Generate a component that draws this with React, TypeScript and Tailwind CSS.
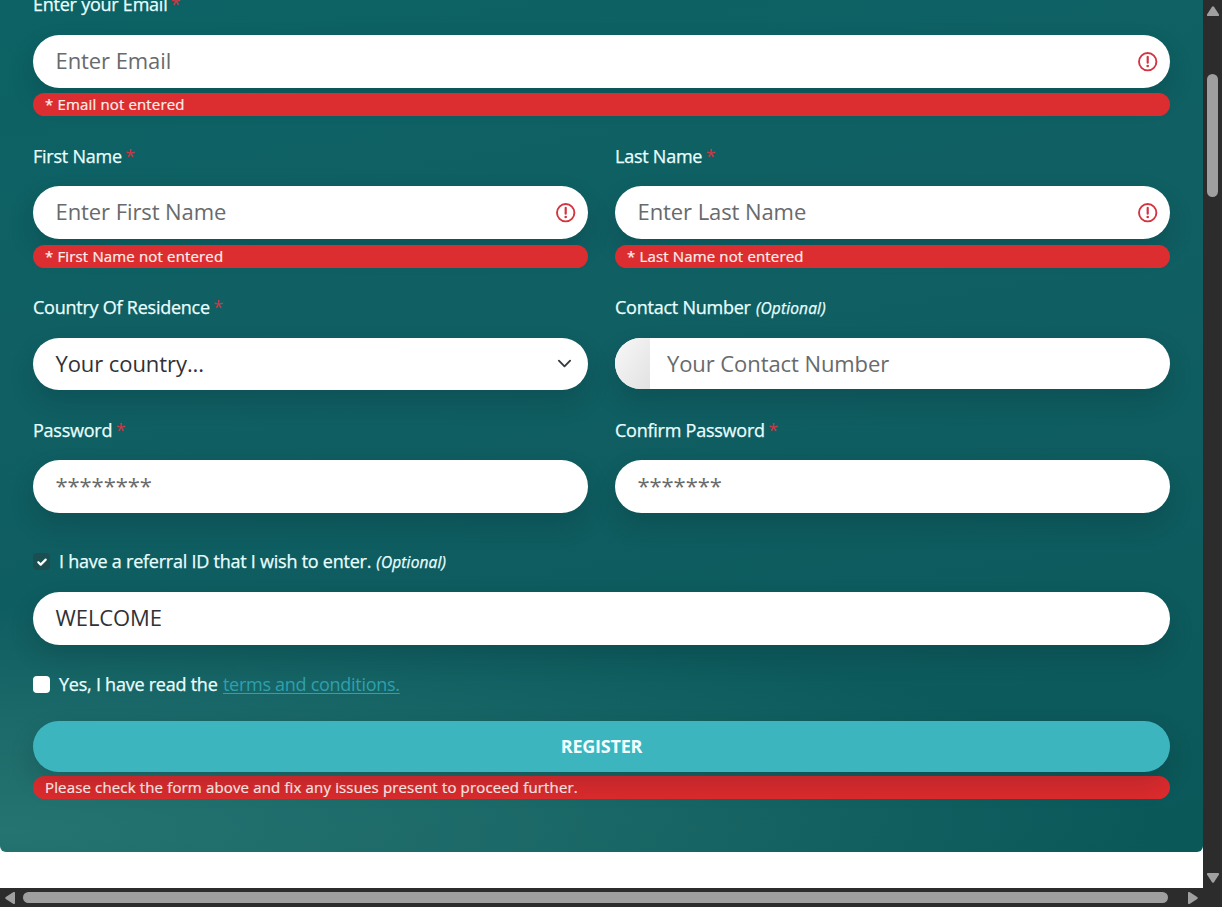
import type { ReactNode } from "react";

const shadow = "shadow-[0_12px_26px_rgba(0,20,25,0.16)]";

function Label({ text, required, optional }: { text: string; required?: boolean; optional?: boolean }) {
  return (
    <label className="block h-[27px] whitespace-nowrap text-[18px] leading-[27px] font-medium tracking-[-0.24px] text-[#e9ffff] [-webkit-text-stroke:0.25px]">
      {text}
      {required && <span className="-ml-px font-normal text-[#c93a47] [-webkit-text-stroke:0]"> *</span>}
      {optional && <em className="ml-px text-[15.5px] tracking-[0.15px]"> (Optional)</em>}
    </label>
  );
}

function ErrorIcon() {
  return (
    <svg viewBox="0 0 20 20" className="mt-0.5 size-5" fill="none" stroke="#d33440">
      <circle cx="9.7" cy="9.7" r="8.7" strokeWidth="1.9" />
      <path d="M9.7 4.900v5.800" strokeWidth="2.2" strokeLinecap="round" />
      <circle cx="9.7" cy="14" r="1.3" fill="#d33440" stroke="none" />
    </svg>
  );
}

function Field({ children, icon, dark, className = "mt-4" }: { children: ReactNode; icon?: ReactNode; dark?: boolean; className?: string }) {
  return (
    <div
      className={`flex h-[53px] items-center justify-between rounded-full bg-white pr-[12.5px] pb-0.5 pl-[22.5px] text-[22px] tracking-[-0.08px] ${shadow} ${className} ${dark ? "text-[#303236]" : "text-[#686a6c]"}`}
    >
      <span>{children}</span>
      {icon}
    </div>
  );
}

function ErrorBar({ children, className }: { children: ReactNode; className: string }) {
  return (
    <div className={`flex h-[23px] items-center rounded-full pl-3 text-[15px] leading-[23px] font-medium tracking-[0.15px] text-[#fff0ec] [-webkit-text-stroke:0.2px] ${className}`}>
      {children}
    </div>
  );
}

function Register() {
  return (
    <main className="h-[852px] overflow-hidden rounded-b-[6px] bg-[radial-gradient(ellipse_1150px_225px_at_0px_830px,rgba(56,134,128,0.58),rgba(56,134,128,0.32)_50%,rgba(56,134,128,0.12)_80%,transparent),linear-gradient(170deg,#0c6264_0%,#105f63_40%,#0b5859_100%)] pr-[33px] pl-[33px]">
      <section className="-mt-[9px]">
        <Label text="Enter your Email" required />
        <Field className="mt-[17px]" icon={<ErrorIcon />}>Enter Email</Field>
        <ErrorBar className="mt-[5px] bg-[#dc2e30]">* Email not entered</ErrorBar>
      </section>
      <div className="mt-[27px] grid grid-cols-2 gap-x-[27px]">
        <section>
          <Label text="First Name" required />
          <Field icon={<ErrorIcon />}>Enter First Name</Field>
          <ErrorBar className="mt-[6px] bg-[#dc2e30]">* First Name not entered</ErrorBar>
        </section>
        <section>
          <Label text="Last Name" required />
          <Field icon={<ErrorIcon />}>Enter Last Name</Field>
          <ErrorBar className="mt-[6px] bg-[#dc2e30]">* Last Name not entered</ErrorBar>
        </section>
      </div>
      <div className="mt-[26px] grid grid-cols-2 gap-x-[27px]">
        <section>
          <Label text="Country Of Residence" required />
          <div className={`mt-[17px] flex h-[52px] items-center justify-between rounded-full bg-white pr-4 pb-px pl-[22.5px] text-[22px] tracking-[-0.08px] text-[#303236] ${shadow}`}>
            <span>Your country...</span>
            <svg viewBox="0 0 16 16" className="size-[15px]" fill="none" stroke="#343a40" strokeWidth="2" strokeLinecap="round" strokeLinejoin="round">
              <path d="m2 5 6 6 6-6" />
            </svg>
          </div>
        </section>
        <section>
          <Label text="Contact Number" optional />
          <div className={`mt-[17px] flex h-[51px] items-center overflow-hidden rounded-full bg-white text-[22px] tracking-[-0.08px] text-[#686a6c] ${shadow}`}>
            <div className="h-full w-[35px] bg-linear-to-br from-[#f8f8f8] to-[#e2e2e2]" />
            <span className="pl-[17px]">Your Contact Number</span>
          </div>
        </section>
      </div>
      <div className="mt-[27px] grid grid-cols-2 gap-x-[27px]">
        <section>
          <Label text="Password" required />
          <Field>********</Field>
        </section>
        <section>
          <Label text="Confirm Password" required />
          <Field>*******</Field>
        </section>
      </div>
      <section className="mt-[35px]">
        <div className="flex items-center gap-[9px]">
          <span className="flex size-[17px] items-center justify-center rounded-[4px] bg-[#1b4e51]">
            <svg viewBox="0 0 12 12" className="size-3" fill="none" stroke="#fff" strokeWidth="2.2" strokeLinecap="round" strokeLinejoin="round">
              <path d="m2.3 6.2 2.4 2.4 5-5" />
            </svg>
          </span>
          <Label text="I have a referral ID that I wish to enter." optional />
        </div>
        <Field className="mt-[17px]" dark>WELCOME</Field>
      </section>
      <div className="mt-[26px] flex items-center gap-[9px]">
        <span className="size-[17px] rounded-[4px] bg-white" />
        <p className="text-[18px] leading-[27px] font-medium tracking-[-0.24px] text-[#e9ffff] [-webkit-text-stroke:0.25px]">
          Yes, I have read the <a className="ml-px font-normal tracking-[-0.28px] text-[#2fa0ad] underline underline-offset-2 [-webkit-text-stroke:0]">terms and conditions.</a>
        </p>
      </div>
      <button className={`relative mt-[23px] block h-[51px] w-full rounded-full bg-[#3db5be] text-[18px] font-bold tracking-[-0.25px] text-[#f2ffff] ${shadow}`}>
        REGISTER
      </button>
      <ErrorBar className="mt-1 bg-[#dc2b2e]">Please check the form above and fix any issues present to proceed further.</ErrorBar>
    </main>
  );
}

export default function App() {
  return (
    <div className="grid h-[907px] w-[1222px] grid-cols-[1203px_19px] grid-rows-[888px_19px] overflow-hidden bg-[#2c2c2c] font-['Open_Sans',sans-serif]">
      <div className="overflow-hidden bg-white">
        <Register />
      </div>
      <div className="flex flex-col items-center">
        <svg viewBox="0 0 12 10" className="mt-[6px] h-[10px] w-3" fill="#a0a0a0">
          <path d="M5 .8q1-1.2 2 0l5 7.7q.3 1.5-1 1.5H1Q-.3 10 0 8.500z" />
        </svg>
        <div className="mt-[58px] h-[123px] w-[11px] rounded-full bg-[#9f9f9f]" />
        <svg viewBox="0 0 12 10" className="mt-auto mb-[5px] h-[10px] w-3 rotate-180" fill="#a0a0a0">
          <path d="M5 .8q1-1.2 2 0l5 7.700q.3 1.5-1 1.500H1Q-.3 10 0 8.500z" />
        </svg>
      </div>
      <div className="flex items-center">
        <svg viewBox="0 0 10 12" className="ml-[5px] h-3 w-[10px]" fill="#a0a0a0">
          <path d="M.8 5q-1.200 1 0 2l7.700 5q1.500.3 1.500-1V1q0-1.300-1.500-1z" />
        </svg>
        <div className="ml-2 h-[11px] w-[1145px] rounded-full bg-[#9f9f9f]" />
        <svg viewBox="0 0 10 12" className="ml-auto mr-[5px] h-3 w-[10px] rotate-180" fill="#a0a0a0">
          <path d="M.8 5q-1.200 1 0 2l7.700 5q1.500.3 1.500-1V1q0-1.300-1.500-1z" />
        </svg>
      </div>
      <div />
    </div>
  );
}
